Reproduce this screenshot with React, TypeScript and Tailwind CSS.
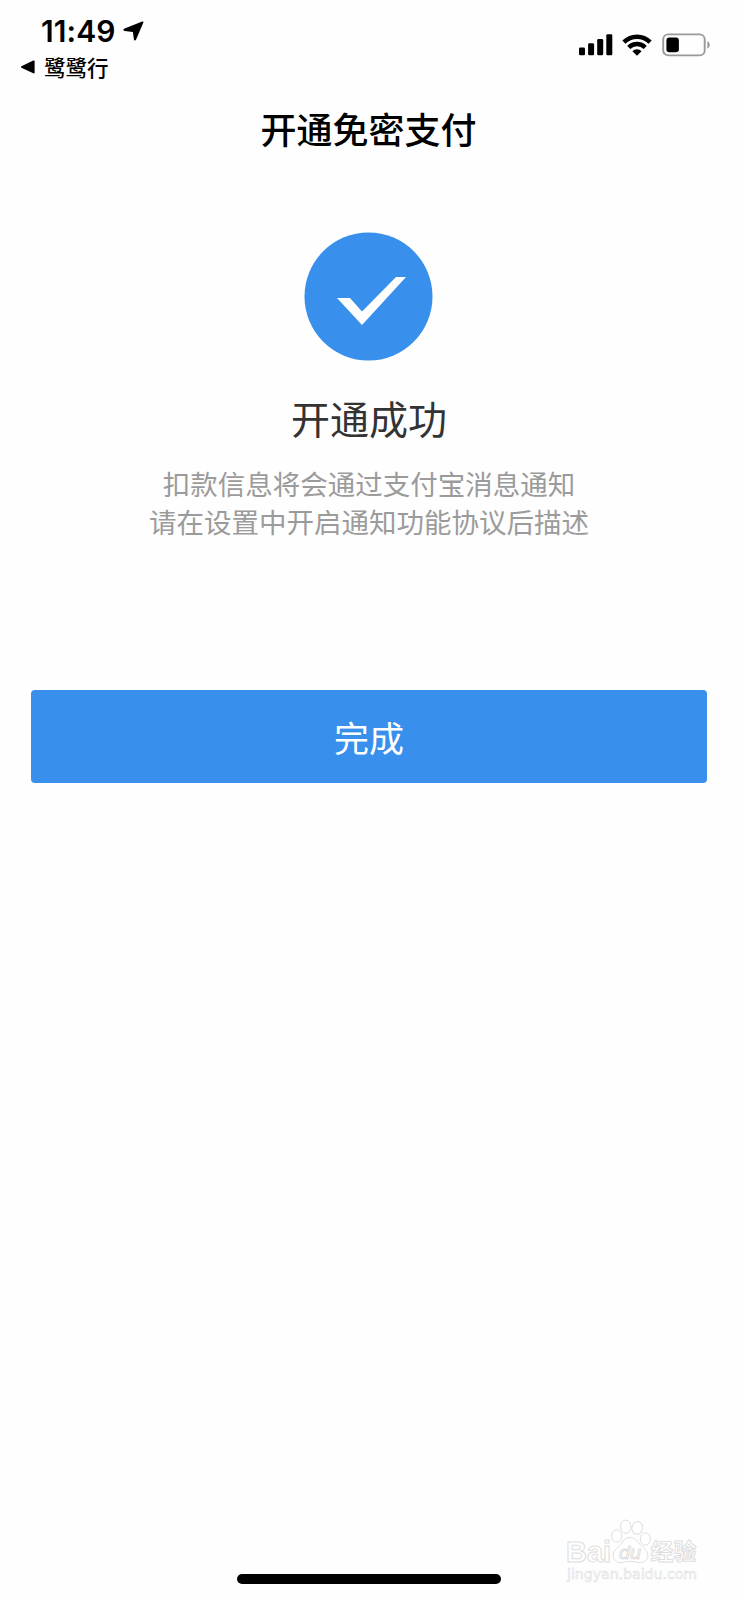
import type { ReactNode } from "react"

const DESCRIPTION = ["扣款信息将会通过支付宝消息通知", "请在设置中开启通知功能协议后描述"]

function SignalIcon() {
  return (
    <svg className="h-[22px] w-[35px]" viewBox="0 0 35 22" fill="#000">
      <rect x="0" y="13.5" width="6" height="7.8" rx="1.3" />
      <rect x="9.1" y="9.3" width="6" height="12" rx="1.3" />
      <rect x="18.2" y="5" width="6" height="16.3" rx="1.3" />
      <rect x="27.3" y="0.3" width="6" height="21" rx="1.3" />
    </svg>
  )
}

function WifiIcon() {
  return (
    <svg className="h-[22px] w-[30px]" viewBox="0 0 30 22">
      <g fill="none" stroke="#000" strokeWidth="4.4">
        <path d="M1.9 8.1 A18.6 18.6 0 0 1 28.1 8.1" />
        <path d="M6.8 13.6 A11.3 11.3 0 0 1 23.2 13.6" />
      </g>
      <path d="M10.4 17.2 A6.5 6.5 0 0 1 19.6 17.2 L15 21.8 Z" fill="#000" />
    </svg>
  )
}

function BatteryIcon() {
  return (
    <svg className="h-6 w-[49px]" viewBox="0 0 49 24">
      <rect x="1.2" y="1.4" width="41.5" height="21" rx="5" fill="none" stroke="#999" strokeWidth="1.9" />
      <rect x="4.4" y="4.6" width="12.5" height="14.6" rx="3" fill="#000" />
      <path d="M45.4 8.3 C48.5 9.5 48.5 14.4 45.4 15.6 Z" fill="#999" />
    </svg>
  )
}

function StatusBar() {
  return (
    <header className="flex h-[90px] justify-between">
      <div className="pl-5 pt-[15px]">
        <div className="flex h-8 items-center pl-[21px] font-[Inter,sans-serif] text-[30px] font-semibold">
          <span className="w-[75px] whitespace-nowrap tracking-[0.1px]">11:49</span>
          <svg className="ml-[7px] h-5 w-[21px]" viewBox="0 0 20 20" fill="#000" preserveAspectRatio="none">
            <path d="M1 7.8 L18.3 0.6 Q20 0.1 19.3 1.8 L12.4 18.8 Q11.2 20.6 10.4 18.4 L9.4 11 L1.5 10 Q-0.5 9.2 1 7.8 Z" />
          </svg>
        </div>
        <div className="mt-[5px] flex h-[30px] items-center gap-[9px]">
          <svg className="h-[14px] w-[15px]" viewBox="0 0 15 14" fill="#000">
            <path d="M1.4 6.2 L13.3 0.5 Q14.6 0.1 14.6 1.4 V12.4 Q14.6 13.8 13.3 13.3 L1.4 7.8 Q0.3 7 1.4 6.2 Z" />
          </svg>
          <span className="-mt-px text-[21.5px] font-medium leading-[30px]">鹭鹭行</span>
        </div>
      </div>
      <div className="flex h-[90px] items-center pr-[27px]">
        <SignalIcon />
        <span className="ml-[8px] flex"><WifiIcon /></span>
        <span className="ml-[10px] flex"><BatteryIcon /></span>
      </div>
    </header>
  )
}

function Watermark() {
  return (
    <svg
      className="absolute bottom-[10px] right-[34px] h-[72px] w-[140px]"
      viewBox="0 0 140 72"
      fill="#fff"
      stroke="#dedede"
      strokeWidth="1"
    >
      <text x="2" y="43.5" className="font-[Liberation_Sans,sans-serif] text-[29px] font-bold" textLength="45" lengthAdjust="spacingAndGlyphs">Bai</text>
      <ellipse cx="52.7" cy="18" rx="5" ry="6.2" />
      <ellipse cx="61.7" cy="8.7" rx="5.2" ry="6.6" />
      <ellipse cx="73.3" cy="10" rx="5.3" ry="6.3" transform="rotate(12 73.3 10)" />
      <ellipse cx="81.3" cy="21" rx="5" ry="6.2" />
      <path d="M66 19.5 C73 19.5 74 26 80 30 C87 36 84 45 75 44.5 C68 43 64 43 58 44.5 C49 45 46 36 53 30 C59 26 59 19.5 66 19.5 Z" />
      <text x="55" y="41" className="font-[Liberation_Sans,sans-serif] text-[19px] italic" textLength="22" lengthAdjust="spacingAndGlyphs">du</text>
      <text x="86.5" y="42" className="font-['Noto_Sans_CJK_SC',sans-serif] text-[23px] font-bold" textLength="46">经验</text>
      <text x="3" y="61" className="font-['DejaVu_Sans',sans-serif] text-[14px]" strokeWidth="0.6" textLength="130" lengthAdjust="spacingAndGlyphs">jingyan.baidu.com</text>
    </svg>
  )
}

function PrimaryButton({ children }: { children: ReactNode }) {
  return (
    <button className="mx-[31px] mt-[150px] flex h-[93px] items-center justify-center rounded-[4px] bg-[#398fec] pt-[2px] text-[35px] font-normal text-white">
      {children}
    </button>
  )
}

export default function App() {
  return (
    <div className="relative flex h-[1600px] w-[738px] flex-col bg-[#fefefe] font-['Noto_Sans_CJK_SC',sans-serif] text-black">
      <StatusBar />
      <h1 className="flex h-[76px] items-center justify-center pr-px text-[36px] font-medium">开通免密支付</h1>

      <main className="flex flex-1 flex-col">
        <svg className="ml-[304px] mt-[66px] h-[129px] w-[129px]" viewBox="0 0 129 129">
          <circle cx="64.5" cy="64.5" r="64" fill="#398fec" />
          <path d="M33 66 H46 L58 79.5 L92 45 H102 L58 93 Z" fill="#fff" />
        </svg>
        <h2 className="mt-[27px] text-center text-[39px] font-normal leading-[58px] text-[#333]">开通成功</h2>
        <div className="mt-[19px] text-center text-[27.5px] font-normal leading-[37.5px] text-[#9b9b9b]">
          {DESCRIPTION.map((line) => (
            <p key={line}>{line}</p>
          ))}
        </div>
        <PrimaryButton>完成</PrimaryButton>
      </main>

      {/* Home indicator */}
      <div className="mb-4 ml-[237px] h-[10px] w-[264px] rounded-full bg-black" />
      <Watermark />
    </div>
  )
}
